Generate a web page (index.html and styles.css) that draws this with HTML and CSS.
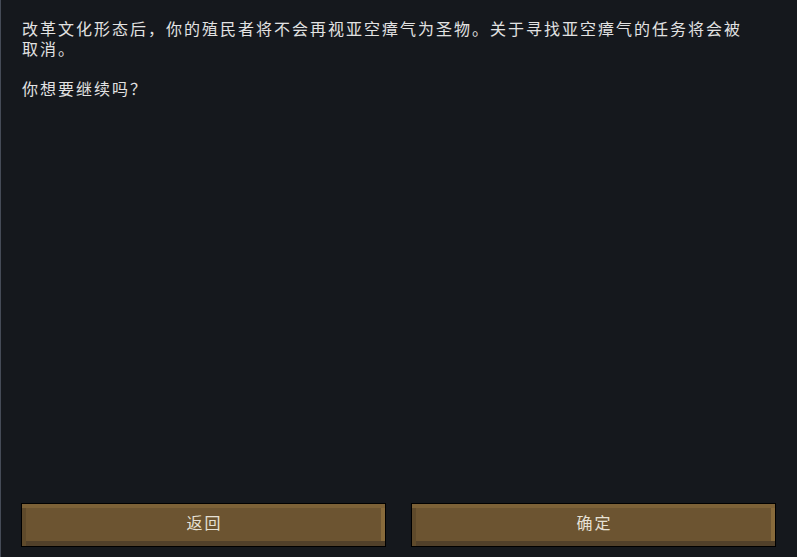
FILE: index.html
```html
<!DOCTYPE html>
<html lang="zh-CN">
<head>
<meta charset="utf-8">
<link rel="stylesheet" href="styles.css">
</head>
<body>
<div class="dialog">
  <div class="message">
    <p class="para">改革文化形态后<span class="comma">，</span>你的殖民者将不会再视亚空瘴气为圣物。关于寻找亚空瘴气的任务将会被<br>取消。</p>
    <p class="para">你想要继续吗<span class="comma">？</span></p>
  </div>
  <div class="actions">
    <button class="btn">返回</button>
    <button class="btn">确定</button>
  </div>
</div>
</body>
</html>
```
FILE: styles.css
```css
html, body {
  margin: 0;
  padding: 0;
  background: #15181d;
}
.dialog {
  width: 797px;
  height: 557px;
  box-sizing: border-box;
  border-left: 1px solid #454b57;
  padding: 18px 21px 10px 20px;
  display: flex;
  flex-direction: column;
  font-family: "Noto Sans CJK SC", "Noto Sans", sans-serif;
  color: #e2e2e2;
}
.message {
  flex: 1;
  padding-left: 1px;
}
.para {
  margin: 0 0 20px 0;
  font-size: 16px;
  line-height: 20px;
  letter-spacing: 2px;
  white-space: nowrap;
}
.comma {
  font-family: "Noto Sans CJK TC", "Noto Sans CJK SC", sans-serif;
}
.actions {
  display: grid;
  grid-template-columns: 1fr 1fr;
  column-gap: 25px;
}
.btn {
  height: 44px;
  box-sizing: border-box;
  border: 1px solid #000;
  padding: 0;
  background: #6c5431;
  box-shadow:
    inset 0 4px 0 #7c6137,
    inset 4px 0 0 #5f4a2b,
    inset 0 -5px 0 #51402a,
    inset -4px 0 0 #876a3b;
  font-family: "Noto Sans CJK SC", "Noto Sans", sans-serif;
  font-size: 16px;
  letter-spacing: 2px;
  color: #e6e1d6;
  padding-bottom: 6px;
  padding-left: 2px;
}
```
